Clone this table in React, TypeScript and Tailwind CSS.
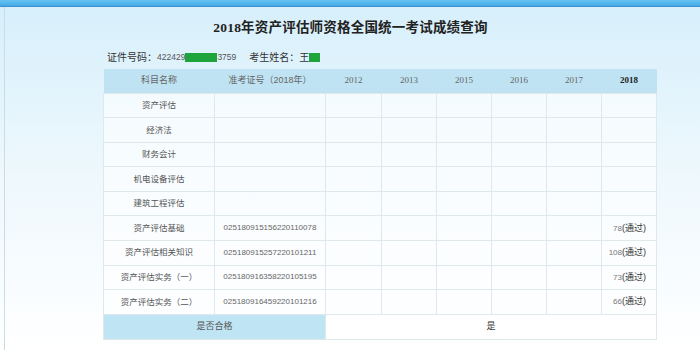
import React from 'react'

const cjk = '"Liberation Sans", "Noto Sans CJK SC", sans-serif'

const years = ['2012', '2013', '2015', '2016', '2017', '2018']

const rows: { name: string; no?: string; score?: string }[] = [
  { name: '资产评估' },
  { name: '经济法' },
  { name: '财务会计' },
  { name: '机电设备评估' },
  { name: '建筑工程评估' },
  { name: '资产评估基础', no: '025180915156220110078', score: '78' },
  { name: '资产评估相关知识', no: '025180915257220101211', score: '108' },
  { name: '资产评估实务（一）', no: '025180916358220105195', score: '73' },
  { name: '资产评估实务（二）', no: '025180916459220101216', score: '66' },
]

export default function App() {
  return (
    <div
      className="w-[700px] h-[350px] overflow-hidden bg-gradient-to-b from-[#d6effb] via-[#eef8fd] to-white"
      style={{ fontFamily: cjk }}
    >
      {/* top bar */}
      <div className="h-[7px] bg-gradient-to-b from-[#66c2f2] to-[#45a9e6] border-b border-[#3b92cc]" />

      <div className="h-[343px] ml-[4px] border-l border-[#c9dde6] flex flex-col">
        <h1
          className="text-center text-[13.5px] font-bold text-[#222] pt-[11px] pr-[4px] h-[40px] tracking-[0.2px]"
          style={{ fontFamily: '"Liberation Serif", "Noto Sans CJK SC", serif' }}
        >
          2018年资产评估师资格全国统一考试成绩查询
        </h1>

        {/* candidate info */}
        <div className="flex items-center h-[20px] pl-[102px] text-[10px] text-[#333]">
          <span>证件号码：</span>
          <span className="text-[8.5px] text-[#555]">422429</span>
          <span className="inline-block w-[32px] h-[9px] bg-[#1fa33b]" />
          <span className="text-[8.5px] text-[#555]">3759</span>
          <span className="ml-[13px]">考生姓名：王</span>
          <span className="inline-block w-[11px] h-[9px] bg-[#1fa33b]" />
        </div>

        <table className="mt-[2px] ml-[98px] w-[553px] table-fixed border-collapse text-[8.5px] text-[#555]">
          <colgroup>
            <col className="w-[111px]" />
            <col className="w-[111px]" />
            <col className="w-[56px]" />
            <col className="w-[55px]" />
            <col className="w-[55px]" />
            <col className="w-[55px]" />
            <col className="w-[55px]" />
            <col className="w-[55px]" />
          </colgroup>
          <thead>
            <tr className="h-[24px] bg-[#bfe3f3] text-[#666]">
              <th className="font-normal text-[9px]">科目名称</th>
              <th className="font-normal text-[9px]">准考证号（2018年）</th>
              {years.map((y) => (
                <th
                  key={y}
                  className={
                    y === '2018'
                      ? 'font-bold text-[#222] text-[9px]'
                      : 'font-normal text-[9px]'
                  }
                  style={{ fontFamily: '"Liberation Serif", serif' }}
                >
                  {y}
                </th>
              ))}
            </tr>
          </thead>
          <tbody>
            {rows.map((r) => (
              <tr key={r.name} className="h-[24.6px] bg-white/60">
                <td className="border border-[#dfe9ec] text-center text-[#555]">{r.name}</td>
                <td className="border border-[#dfe9ec] text-center text-[8px] text-[#666]">{r.no ?? ''}</td>
                {years.map((y) => (
                  <td key={y} className="border border-[#dfe9ec] text-right pr-[10px] text-[#444]">
                    {y === '2018' && r.score ? (
                      <>
                        <span className="text-[8px] text-[#777]">{r.score}</span>
                        <span className="text-[9px] text-[#333]">(通过)</span>
                      </>
                    ) : null}
                  </td>
                ))}
              </tr>
            ))}
            <tr className="h-[25px]">
              <td colSpan={2} className="bg-[#bfe4f4] border border-[#dfe9ec] text-center text-[9px] text-[#555]">
                是否合格
              </td>
              <td colSpan={6} className="bg-white border border-[#dfe9ec] text-center text-[9px] text-[#333]">
                是
              </td>
            </tr>
          </tbody>
        </table>
      </div>
    </div>
  )
}
